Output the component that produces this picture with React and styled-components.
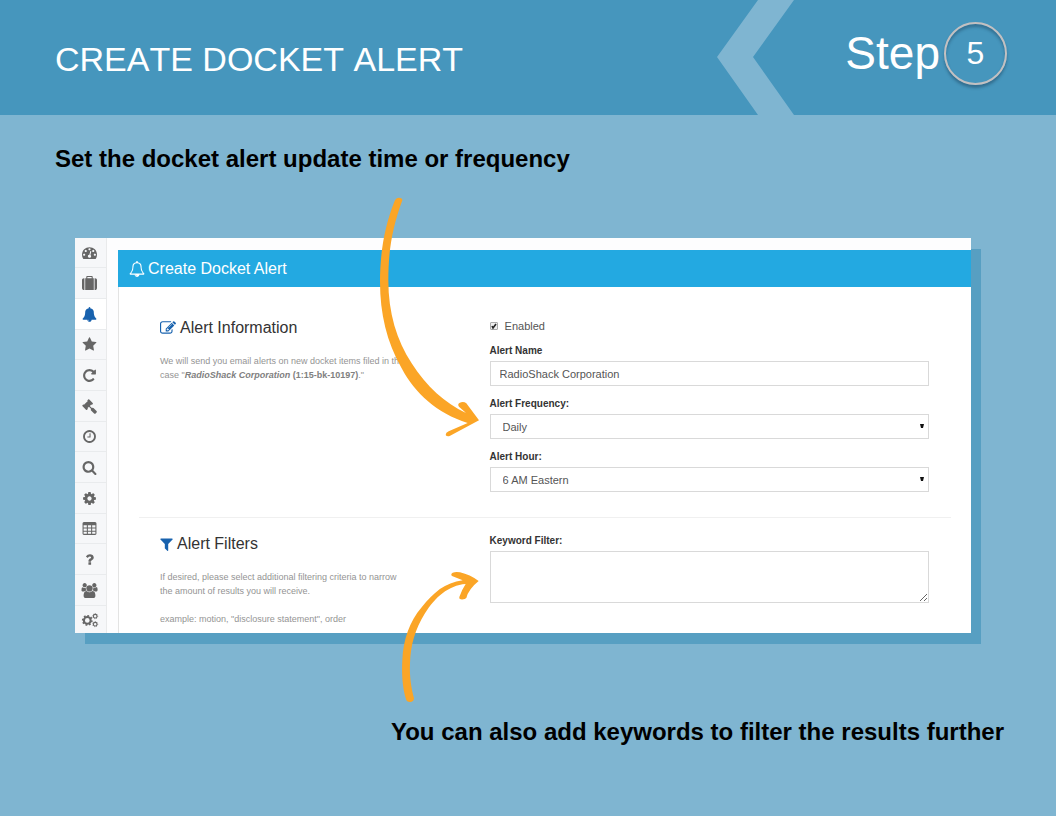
import React from "react";
import styled, { createGlobalStyle } from "styled-components";

const GlobalStyle = createGlobalStyle`
  * { box-sizing: border-box; }
  body {
    margin: 0;
    background: #7fb5d1;
    font-family: "Liberation Sans", Arial, sans-serif;
  }
  h1, h2, h3, p, ul, figure { margin: 0; padding: 0; }
`;

const Header = styled.header`
  display: flex;
  height: 115px;
  background: #4696bd;
  color: #fff;
`;

const Title = styled.h1`
  flex: 1;
  align-self: center;
  padding: 2px 0 0 55px;
  font-size: 34px;
  line-height: 40px;
  font-weight: 400;
  font-kerning: none;
  white-space: nowrap;
`;

const Chevron = styled.svg`
  flex: none;
  width: 77px;
  height: 100%;
  fill: #7fb5d1;
`;

const Step = styled.div`
  flex: none;
  display: flex;
  align-items: center;
  justify-content: flex-end;
  gap: 4px;
  width: 262px;
  padding: 0 49px 9px 0;
  font-size: 46px;
  line-height: 56px;
`;

const StepNumber = styled.span`
  display: flex;
  align-items: center;
  justify-content: center;
  width: 63px;
  height: 63px;
  border: 2px solid #c3c0c1;
  border-radius: 50%;
  box-shadow: 0 3px 3px rgba(20, 50, 75, 0.4), inset 0 3px 3px rgba(20, 50, 75, 0.35);
  font-size: 32px;
`;

const Callout = styled.h2`
  padding: 0 52px 0 55px;
  font-size: 24px;
  line-height: 28px;
  font-weight: 700;
  color: #000;
  text-align: ${(p) => p.$align || "left"};
`;

const Slide = styled.main`
  display: flex;
  flex-direction: column;
  padding: 30px 0 70px;
`;

const Figure = styled.figure`
  position: relative;
  margin: 65px 85px 85px 75px;
`;

const Arrow = styled.svg`
  position: absolute;
  left: ${(p) => p.$left}px;
  top: ${(p) => p.$top}px;
  pointer-events: none;
  fill: #fba526;
`;

const Window = styled.div`
  display: flex;
  background: #fdfdfe;
  box-shadow: 10px 11px 0 #579fc2;
`;

const Sidebar = styled.ul`
  flex: none;
  width: 32px;
  list-style: none;
  border-right: 1px solid #e9eaeb;
`;

const SidebarItem = styled.li`
  height: 31px;
  background: ${(p) => (p.$active ? "#fff" : "#f6f7f9")};
  color: ${(p) => (p.$active ? "#1862ae" : "#666")};
  border-bottom: 1px solid #e9ebed;
  &:nth-child(3n + 1) { height: 30px; }
  &:last-child { height: 27px; border-bottom: 0; }
`;

const SidebarLink = styled.a`
  display: flex;
  align-items: center;
  justify-content: center;
  height: 100%;
  padding-right: 2px;
  color: inherit;
`;

const Glyph = styled.svg`
  flex: none;
  width: ${(p) => p.$size || 15}px;
  height: ${(p) => p.$size || 15}px;
  fill: currentColor;
  overflow: visible;
`;

const Card = styled.form`
  flex: 1;
  margin: 12px 0 0 11px;
  background: #fff;
  border-left: 1px solid #e3e3e3;
`;

const CardHeader = styled.h2`
  display: flex;
  align-items: center;
  gap: 3px;
  height: 37px;
  margin-left: -1px;
  padding-left: 11px;
  background: #23a9e1;
  color: #fff;
  font-size: 16px;
  font-weight: 400;
`;

const Section = styled.section`
  display: grid;
  grid-template-columns: 3fr 4fr;
  margin: 0 20px;
  padding: ${(p) => (p.$first ? "31px 22px 25px 21px" : "16px 22px 7px 21px")};
  border-top: ${(p) => (p.$first ? "0" : "1px solid #f0f0f0")};
`;

const SectionTitle = styled.h3`
  display: flex;
  align-items: center;
  gap: 4px;
  margin-bottom: 16px;
  font-size: 16px;
  line-height: 20px;
  font-weight: 400;
  color: #333;
  svg { color: #1862ae; }
`;

const Hint = styled.p`
  max-width: 246px;
  margin-bottom: 14px;
  font-size: 9px;
  line-height: 14px;
  color: #949494;
  &:last-child { margin-bottom: 0; }
  b { color: #808080; }
`;

const Fields = styled.div`
  display: flex;
  flex-direction: column;
  gap: 11px;
`;

const CheckRow = styled.label`
  display: flex;
  align-items: center;
  gap: 7px;
  height: 15px;
  font-size: 11px;
  color: #555;
`;

const Checkbox = styled.input`
  width: 8px;
  height: 8px;
  margin: 0;
  appearance: none;
  border: 1px solid #aaa;
  border-radius: 1px;
  background: #eee;
`;

const CheckBoxWrap = styled.span`
  position: relative;
  display: flex;
  svg {
    position: absolute;
    inset: 0;
    pointer-events: none;
  }
`;

const Field = styled.div`
  display: flex;
  flex-direction: column;
  gap: 3px;
`;

const Label = styled.label`
  font-size: 10px;
  line-height: 14px;
  font-weight: 700;
  color: #333;
`;

const controlStyle = `
  width: 100%;
  margin: 0;
  border: 1px solid #d9d9d9;
  border-radius: 0;
  background: #fff;
  color: #555;
  font-family: inherit;
  font-size: 11px;
  outline: 0;
`;

const TextInput = styled.input`
  ${controlStyle}
  height: 25px;
  padding: 0 9px;
`;

const SelectWrap = styled.div`
  position: relative;
  display: flex;
  svg {
    position: absolute;
    right: 5px;
    top: 10px;
    pointer-events: none;
  }
`;

const Select = styled.select`
  ${controlStyle}
  height: 25px;
  padding: 0 12px;
  appearance: none;
`;

const TextArea = styled.textarea`
  ${controlStyle}
  display: block;
  height: 52px;
  padding: 6px 9px;
  resize: vertical;
`;

const icons = {
  dashboard:
    "M384 1152q0-53-37.5-90.5t-90.5-37.5-90.5 37.5-37.5 90.5 37.5 90.5 90.5 37.5 90.5-37.5 37.5-90.5zm192-448q0-53-37.5-90.5t-90.5-37.5-90.5 37.5-37.5 90.5 37.5 90.5 90.5 37.5 90.5-37.5 37.5-90.5zm428 481l101-382q6-26-7.5-48.5t-38.5-29.5-48 6.5-30 39.5l-101 382q-60 5-107 43.5t-63 98.5q-20 77 20 146t117 89 146-20 89-117q16-60-6-117t-72-91zm660-33q0-53-37.5-90.5t-90.5-37.5-90.5 37.5-37.5 90.5 37.5 90.5 90.5 37.5 90.5-37.5 37.5-90.5zm-640-640q0-53-37.5-90.5t-90.5-37.5-90.5 37.5-37.5 90.5 37.5 90.5 90.5 37.5 90.5-37.5 37.5-90.5zm448 192q0-53-37.5-90.5t-90.5-37.5-90.5 37.5-37.5 90.5 37.5 90.5 90.5 37.5 90.5-37.5 37.5-90.5zm320 448q0 261-141 483-19 29-54 29h-1402q-35 0-54-29-141-221-141-483 0-182 71-348t191-286 286-191 348-71 348 71 286 191 191 286 71 348z",
  suitcase:
    "M640 256h512v-128h-512v128zm-352 0v1408h-64q-92 0-158-66t-66-158v-960q0-92 66-158t158-66h64zm1120 0v1408h-1024v-1408h128v-160q0-40 28-68t68-28h576q40 0 68 28t28 68v160h128zm384 224v960q0 92-66 158t-158 66h-64v-1408h64q92 0 158 66t66 158z",
  bell: "M912 1696q0-16-16-16-59 0-101.5-42.5t-42.5-101.5q0-16-16-16t-16 16q0 73 51.5 124.5t124.5 51.5q16 0 16-16zm816-288q0 52-38 90t-90 38h-448q0 106-75 181t-181 75-181-75-75-181h-448q-52 0-90-38t-38-90q50-42 91-88t85-119.5 74.5-158.5 50-206 19.5-260q0-152 117-282.5t307-158.5q-8-19-8-39 0-40 28-68t68-28 68 28 28 68q0 20-8 39 190 28 307 158.5t117 282.5q0 139 19.5 260t50 206 74.5 158.5 85 119.5 91 88z",
  bellOutline:
    "M912 1696q0-16-16-16-59 0-101.5-42.5t-42.5-101.5q0-16-16-16t-16 16q0 73 51.5 124.5t124.5 51.5q16 0 16-16zm-666-288h1300q-266-300-266-832 0-51-24-105t-69-103-121.5-80.5-169.5-31.5-169.5 31.5-121.5 80.5-69 103-24 105q0 532-266 832zm1482 0q0 52-38 90t-90 38h-448q0 106-75 181t-181 75-181-75-75-181h-448q-52 0-90-38t-38-90q50-42 91-88t85-119.5 74.5-158.5 50-206 19.5-260q0-152 117-282.5t307-158.5q-8-19-8-39 0-40 28-68t68-28 68 28 28 68q0 20-8 39 190 28 307 158.5t117 282.5q0 139 19.5 260t50 206 74.5 158.5 85 119.5 91 88z",
  star: "M1728 647q0 22-26 48l-363 354 86 500q1 7 1 20 0 21-10.5 35.5t-30.5 14.5q-19 0-40-12l-449-236-449 236q-22 12-40 12-21 0-31.5-14.5t-10.5-35.5q0-6 2-20l86-500-364-354q-25-27-25-48 0-37 56-46l502-73 225-455q19-41 49-41t49 41l225 455 502 73q56 9 56 46z",
  repeat:
    "M1664 256v448q0 26-19 45t-45 19h-448q-42 0-59-40-17-39 14-69l138-138q-148-137-349-137-104 0-198.5 40.5t-163.5 109.5-109.5 163.5-40.5 198.5 40.5 198.5 109.5 163.5 163.5 109.5 198.5 40.5q119 0 225-52t179-147q7-10 23-12 15 0 25 9l137 138q9 8 9.5 20.5t-7.5 22.5q-109 132-264 204.5t-327 72.5q-156 0-298-61t-245-164-164-245-61-298 61-298 164-245 245-164 298-61q147 0 284.5 55.5t244.5 156.5l130-129q29-31 70-14 39 17 39 59z",
  gavel:
    "M1771 1536q0 53-37 90l-107 108q-39 37-91 37-53 0-90-37l-363-364q-38-36-38-90 0-53 43-96l-256-256-126 126q-14 14-34 14t-34-14q2 2 12.5 12t12.5 13 10 11.5 10 13.5 6 13.5 5.5 16.5 1.5 18q0 38-28 68-3 3-16.5 18t-19 20.5-18.5 16.5-22 15.5-22 9-26 4.5q-40 0-68-28l-408-408q-28-28-28-68 0-13 4.5-26t9-22 15.5-22 16.5-18.5 20.5-19 18-16.5q30-28 68-28 10 0 18 1.5t16.5 5.5 13.5 6 13.5 10 11.5 10 13 12.5 12 12.5q-14-14-14-34t14-34l348-348q14-14 34-14t34 14q-2-2-12.5-12t-12.5-13-10-11.5-10-13.5-6-13.5-5.5-16.5-1.5-18q0-38 28-68 3-3 16.5-18t19-20.5 18.5-16.5 22-15.5 22-9 26-4.5q40 0 68 28l408 408q28 28 28 68 0 13-4.5 26t-9 22-15.5 22-16.5 18.5-20.5 19-18 16.5q-30 28-68 28-10 0-18-1.5t-16.5-5.5-13.5-6-13.5-10-11.5-10-13-12.5-12-12.5q14 14 14 34t-14 34l-126 126 256 256q43-43 96-43 52 0 91 37l363 363q37 39 37 91z",
  clock:
    "M1024 544v448q0 14-9 23t-23 9h-320q-14 0-23-9t-9-23v-64q0-14 9-23t23-9h224v-352q0-14 9-23t23-9h64q14 0 23 9t9 23zm416 352q0-148-73-273t-198-198-273-73-273 73-198 198-73 273 73 273 198 198 273 73 273-73 198-198 73-273zm224 0q0 209-103 385.5t-279.5 279.5-385.5 103-385.5-103-279.5-279.5-103-385.5 103-385.5 279.5-279.5 385.5-103 385.5 103 279.5 279.5 103 385.5z",
  search:
    "M1216 832q0-185-131.5-316.5t-316.5-131.5-316.5 131.5-131.5 316.5 131.5 316.5 316.5 131.5 316.5-131.5 131.5-316.5zm512 832q0 52-38 90t-90 38q-54 0-90-38l-343-342q-179 124-399 124-143 0-273.5-55.5t-225-150-150-225-55.5-273.5 55.5-273.5 150-225 225-150 273.5-55.5 273.5 55.5 225 150 150 225 55.5 273.5q0 220-124 399l343 343q37 37 37 90z",
  cog: "M1152 896q0-106-75-181t-181-75-181 75-75 181 75 181 181 75 181-75 75-181zm512-109v222q0 12-8 23t-20 13l-185 28q-19 54-39 91 35 50 107 138 10 12 10 25t-9 23q-27 37-99 108t-94 71q-12 0-26-9l-138-108q-44 23-91 38-16 136-29 186-7 28-36 28h-222q-14 0-24.5-8.5t-11.5-21.5l-28-184q-49-16-90-37l-141 107q-10 9-25 9-14 0-25-11-126-114-165-168-7-10-7-23 0-12 8-23 15-21 51-66.5t54-70.5q-27-50-41-99l-183-27q-13-2-21-12.5t-8-23.5v-222q0-12 8-23t19-13l186-28q14-46 39-92-40-57-107-138-10-12-10-24 0-10 9-23 26-36 98.5-107.5t94.5-71.5q13 0 26 10l138 107q44-23 91-38 16-136 29-186 7-28 36-28h222q14 0 24.5 8.5t11.5 21.5l28 184q49 16 90 37l142-107q9-9 24-9 13 0 25 10 129 119 165 170 7 8 7 22 0 12-8 23-15 21-51 66.5t-54 70.5q26 50 41 98l183 28q13 2 21 12.5t8 23.5z",
  table:
    "M224 128h1344q66 0 113 47t47 113v1216q0 66-47 113t-113 47h-1344q-66 0-113-47t-47-113v-1216q0-66 47-113t113-47zm-32 384v256h384v-256zm512 0v256h384v-256zm512 0v256h384v-256zm-1024 384v256h384v-256zm512 0v256h384v-256zm512 0v256h384v-256zm-1024 384v256h384v-256zm512 0v256h384v-256zm512 0v256h384v-256z",
  question:
    "M1088 1256v240q0 16-12 28t-28 12h-240q-16 0-28-12t-12-28v-240q0-16 12-28t28-12h240q16 0 28 12t12 28zm316-600q0 54-15.5 101t-35 76.5-55 59.5-57.5 43.5-61 35.5q-41 23-68.5 65t-27.5 67q0 17-12 32.5t-28 15.5h-240q-15 0-25.5-18.5t-10.5-37.5v-45q0-83 65-156.5t143-108.5q59-27 84-56t25-76q0-42-46.5-74t-107.5-32q-65 0-108 29-35 25-107 115-13 16-31 16-12 0-25-8l-164-125q-13-10-15.5-25t5.5-28q160-266 464-266 80 0 161 31t146 83 106 127.5 41 158.5z",
  users:
    "M529 896q-162 5-265 128h-134q-82 0-138-40.5t-56-118.5q0-353 124-353 6 0 43.5 21t97.5 42.5 119 21.5q67 0 133-23-5 37-5 66 0 159 93 293zm1071 637q0 120-73 189.5t-194 69.5h-874q-121 0-194-69.5t-73-189.5q0-53 3.5-103.5t14-109 26.5-108.5 43-97.5 62-81 85.5-53.5 111.5-20q10 0 43 21.5t73 48 107 48 135 21.5 135-21.5 107-48 73-48 43-21.5q61 0 111.5 20t85.5 53.5 62 81 43 97.5 26.5 108.5 14 109 3.5 103.5zm-1024-1277q0 106-75 181t-181 75-181-75-75-181 75-181 181-75 181 75 75 181zm704 384q0 159-112.5 271.5t-271.5 112.5-271.5-112.5-112.5-271.5 112.5-271.5 271.5-112.5 271.5 112.5 112.5 271.5zm576 225q0 78-56 118.5t-138 40.5h-134q-103-123-265-128 93-134 93-293 0-29-5-66 66 23 133 23 59 0 119-21.5t97.5-42.5 43.5-21q124 0 124 353zm-128-609q0 106-75 181t-181 75-181-75-75-181 75-181 181-75 181 75 75 181z",
  edit: "M888 1184l116-116-152-152-116 116v56h96v96h56zm440-720q-16-16-33 1l-350 350q-17 17-1 33t33-1l350-350q17-17 1-33zm80 594v190q0 119-84.5 203.5t-203.5 84.5h-832q-119 0-203.5-84.5t-84.5-203.5v-832q0-119 84.5-203.5t203.5-84.5h832q63 0 117 25 15 7 18 23 3 17-9 29l-49 49q-14 14-32 8-23-6-45-6h-832q-66 0-113 47t-47 113v832q0 66 47 113t113 47h832q66 0 113-47t47-113v-126q0-13 9-22l64-64q15-15 35-7t20 29zm-96-738l288 288-672 672h-288v-288zm444 132l-92 92-288-288 92-92q28-28 68-28t68 28l152 152q28 28 28 68t-28 68z",
  filter:
    "M1595 295q17 41-14 70l-493 493v742q0 42-39 59-13 5-25 5-27 0-45-19l-256-256q-19-19-19-45v-486l-493-493q-31-29-14-70 17-39 59-39h1280q42 0 59 39z",
};

function Icon({ name, size, viewBox = "0 0 1792 1792" }) {
  return (
    <Glyph viewBox={viewBox} $size={size} aria-hidden="true">
      <path d={icons[name]} fillRule={name === "table" ? "evenodd" : "nonzero"} />
    </Glyph>
  );
}

function Gear({ cx, cy, r }) {
  const ring = { cx, cy, fill: "none", stroke: "currentColor" };
  return (
    <>
      <circle {...ring} r={r * 0.65} strokeWidth={r * 0.4} />
      <circle {...ring} r={r * 0.9} strokeWidth={r * 0.28} pathLength="16" strokeDasharray="1 1" />
    </>
  );
}

function GearsIcon() {
  return (
    <Glyph viewBox="0 0 16 16" $size={16} aria-hidden="true">
      <Gear cx={5.3} cy={8.4} r={5.2} />
      <Gear cx={13.2} cy={4.2} r={2.8} />
      <Gear cx={13.2} cy={12.2} r={2.8} />
    </Glyph>
  );
}

const navItems = [
  { name: "dashboard", label: "Dashboard" },
  { name: "suitcase", label: "Cases" },
  { name: "bell", label: "Alerts", active: true },
  { name: "star", label: "Favorites" },
  { name: "repeat", label: "Refresh" },
  { name: "gavel", label: "Courts" },
  { name: "clock", label: "History" },
  { name: "search", label: "Search" },
  { name: "cog", label: "Settings" },
  { name: "table", label: "Reports" },
  { name: "question", label: "Help" },
  { name: "users", label: "Users" },
  { name: "cogs", label: "Administration" },
];

function SelectField({ id, label, options }) {
  return (
    <Field>
      <Label htmlFor={id}>{label}</Label>
      <SelectWrap>
        <Select id={id} defaultValue={options[0]}>
          {options.map((option) => (
            <option key={option}>{option}</option>
          ))}
        </Select>
        <svg width="4" height="4" viewBox="0 0 4 4" aria-hidden="true">
          <path d="M0 0h4L3 4H1z" fill="#111" />
        </svg>
      </SelectWrap>
    </Field>
  );
}

export default function App() {
  return (
    <>
      <GlobalStyle />
      <Header>
        <Title>CREATE DOCKET ALERT</Title>
        <Chevron viewBox="0 0 77 115" preserveAspectRatio="none" aria-hidden="true">
          <path d="M41 0h36L36 57l41 58H41L0 57z" />
        </Chevron>
        <Step>
          Step <StepNumber>5</StepNumber>
        </Step>
      </Header>
      <Slide>
        <Callout>Set the docket alert update time or frequency</Callout>
        <Figure>
          <Window>
            <Sidebar>
              {navItems.map(({ name, label, active }) => (
                <SidebarItem key={name} $active={active}>
                  <SidebarLink href="#" aria-label={label}>
                    {name === "cogs" ? <GearsIcon /> : <Icon name={name} />}
                  </SidebarLink>
                </SidebarItem>
              ))}
            </Sidebar>
            <Card>
              <CardHeader>
                <Icon name="bellOutline" size={16} />
                Create Docket Alert
              </CardHeader>
              <Section $first>
                <div>
                  <SectionTitle>
                    <Icon name="edit" size={16} />
                    Alert Information
                  </SectionTitle>
                  <Hint>
                    We will send you email alerts on new docket items filed in the case "
                    <b>
                      <i>RadioShack Corporation</i> (1:15-bk-10197)
                    </b>
                    ."
                  </Hint>
                </div>
                <Fields>
                  <CheckRow>
                    <CheckBoxWrap>
                      <Checkbox type="checkbox" defaultChecked />
                      <svg width="8" height="8" viewBox="0 0 8 8" aria-hidden="true">
                        <path d="M2 4l1 2 3-4" fill="none" stroke="#222" strokeWidth="1.6" />
                      </svg>
                    </CheckBoxWrap>
                    Enabled
                  </CheckRow>
                  <Field>
                    <Label htmlFor="alert-name">Alert Name</Label>
                    <TextInput id="alert-name" defaultValue="RadioShack Corporation" />
                  </Field>
                  <SelectField id="frequency" label="Alert Frequency:" options={["Daily"]} />
                  <SelectField id="hour" label="Alert Hour:" options={["6 AM Eastern"]} />
                </Fields>
              </Section>
              <Section>
                <div>
                  <SectionTitle>
                    <Icon name="filter" size={13} viewBox="190 192 1408 1472" />
                    Alert Filters
                  </SectionTitle>
                  <Hint>
                    If desired, please select additional filtering criteria to narrow the amount
                    of results you will receive.
                  </Hint>
                  <Hint>example: motion, "disclosure statement", order</Hint>
                </div>
                <Fields>
                  <Field>
                    <Label htmlFor="keywords">Keyword Filter:</Label>
                    <TextArea id="keywords" />
                  </Field>
                </Fields>
              </Section>
            </Card>
          </Window>
          <Arrow $left={265} $top={-48} width="200" height="260" viewBox="0 0 600 780" aria-hidden="true">
            <path d="M163 35Q167 23 177 23Q188 24 187 31C158 110 145 180 145 270C145 370 170 450 215 520C260 590 315 640 378 669L357 650Q352 643 358 639Q370 633 379 640L417 691L329 738Q320 740 317 735Q317 728 326 724L383 699C290 670 225 610 185 535C140 455 120 370 120 275C120 185 135 105 163 35Z" />
          </Arrow>
          <Arrow $left={305} $top={292} width="220" height="220" viewBox="0 0 660 660" aria-hidden="true">
            <path d="M79 511C66 470 65 425 67 390C70 330 88 275 125 232C160 188 195 158 248 151L216 138Q211 132 218 128Q228 124 240 127Q270 134 296 153Q265 178 259 204Q255 209 242 208Q236 207 238 201Q245 180 257 162C205 166 165 202 135 250C105 298 92 345 90 400C88 440 94 475 102 505Q102 514 92 516Q82 517 79 511Z" />
          </Arrow>
        </Figure>
        <Callout $align="right">You can also add keywords to filter the results further</Callout>
      </Slide>
    </>
  );
}
